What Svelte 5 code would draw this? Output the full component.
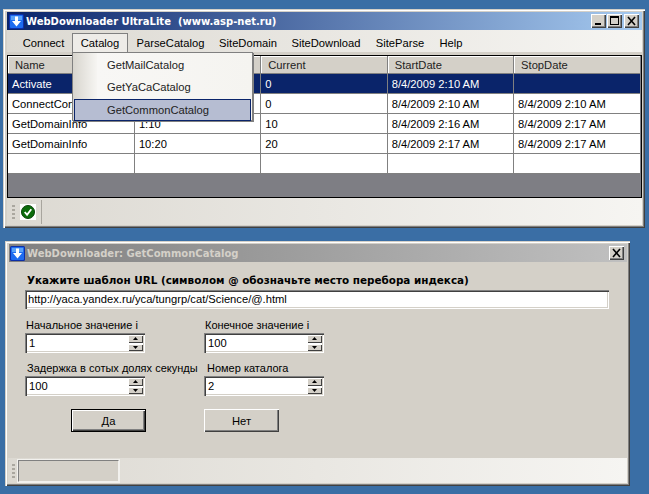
<script>
  const menu = [
    { label: 'Connect', w: 61 },
    { label: 'Catalog', w: 56, open: true },
    { label: 'ParseCatalog', w: 85 },
    { label: 'SiteDomain', w: 70 },
    { label: 'SiteDownload', w: 86 },
    { label: 'SiteParse', w: 62 },
    { label: 'Help', w: 40 }
  ];
  const cols = ['Name', '', 'Current', 'StartDate', 'StopDate'];
  const rows = [
    ['Activate', '', '0', '8/4/2009 2:10 AM', ''],
    ['ConnectCon', '', '0', '8/4/2009 2:10 AM', '8/4/2009 2:10 AM'],
    ['GetDomainInfo', '1:10', '10', '8/4/2009 2:16 AM', '8/4/2009 2:17 AM'],
    ['GetDomainInfo', '10:20', '20', '8/4/2009 2:17 AM', '8/4/2009 2:17 AM'],
    ['', '', '', '', '']
  ];
</script>

{#snippet appIcon()}
  <svg class="appicon" width="15" height="15" viewBox="0 0 15 15">
    <rect width="15" height="15" rx="1.500" fill="#0c2fa8" />
    <rect x="1" y="1" width="13" height="13" rx="1" fill="#1e6cf0" />
    <rect x="2" y="2" width="11" height="4" fill="#5aa2f7" />
    <path d="M6 2.500h3v4.500h3l-4.500 5.500L3 7h3z" fill="#fff" />
  </svg>
{/snippet}

{#snippet spinner(value, cls)}
  <div class="spin {cls}">
    <span class="val">{value}</span>
    <div class="arrows">
      <div class="arr"><svg width="5" height="3" viewBox="0 0 5 3"><path d="M2.500 0L5 3H0z" fill="#000" /></svg></div>
      <div class="arr"><svg width="5" height="3" viewBox="0 0 5 3"><path d="M0 0h5L2.500 3z" fill="#000" /></svg></div>
    </div>
  </div>
{/snippet}

{#snippet grip()}
  <div class="grip"><i></i><i></i><i></i><i></i></div>
{/snippet}

<div class="win main">
  <div class="title active">
    {@render appIcon()}
    <span class="ttext">WebDownloader UltraLite&nbsp; (www.asp-net.ru)</span>
    <div class="tbtns">
      <div class="tb"><svg width="15" height="14" viewBox="0 0 15 14"><rect x="4" y="9" width="6" height="2" fill="#000" /></svg></div>
      <div class="tb"><svg width="15" height="14" viewBox="0 0 15 14"><path d="M3 2h9v9H3z M4 4v6h7V4z" fill="#000" fill-rule="evenodd" /></svg></div>
      <div class="tb gap"><svg width="15" height="14" viewBox="0 0 15 14"><path d="M4 3l7 8M11 3l-7 8" stroke="#000" stroke-width="1.600" /></svg></div>
    </div>
  </div>
  <div class="menubar">
    {#each menu as m}
      <div class="mi" class:open={m.open} style="width:{m.w}px">{m.label}</div>
    {/each}
  </div>
  <div class="gridwrap">
    <table>
      <thead>
        <tr>{#each cols as c}<th>{c}</th>{/each}</tr>
      </thead>
      <tbody>
        {#each rows as r, i}
          <tr class:sel={i === 0}>{#each r as c}<td>{c}</td>{/each}</tr>
        {/each}
      </tbody>
    </table>
  </div>
  <div class="toolbar">
    {@render grip()}
    <div class="tool">
      <div class="wicon">
        <svg width="14" height="14" viewBox="0 0 15 15">
          <circle cx="7.500" cy="7.500" r="7" fill="#0b6b0b" stroke="#063f06" />
          <path d="M4 7.500l2.500 3L11 4.500" fill="none" stroke="#fff" stroke-width="2" />
        </svg>
      </div>
    </div>
  </div>
  <div class="popup">
    <div class="pi">GetMailCatalog</div>
    <div class="pi">GetYaCaCatalog</div>
    <div class="pi hot">GetCommonCatalog</div>
  </div>
</div>

<div class="win dlg">
  <div class="title inactive">
    {@render appIcon()}
    <span class="ttext">WebDownloader: GetCommonCatalog</span>
    <div class="tbtns">
      <div class="tb"><svg width="15" height="14" viewBox="0 0 15 14"><path d="M4 3l7 8M11 3l-7 8" stroke="#000" stroke-width="1.600" /></svg></div>
    </div>
  </div>
  <div class="form">
    <div class="lead">Укажите шаблон URL (символом @ обозначьте место перебора индекса)</div>
    <div class="url">http://yaca.yandex.ru/yca/tungrp/cat/Science/@.html</div>
    <div class="fields">
      <div class="field">
        <div class="lbl">Начальное значение i</div>
        {@render spinner('1', 'a')}
      </div>
      <div class="field">
        <div class="lbl">Конечное значение i</div>
        {@render spinner('100', 'low')}
      </div>
      <div class="field">
        <div class="lbl third">Задержка в сотых долях секунды</div>
        {@render spinner('100', 'a')}
      </div>
      <div class="field">
        <div class="lbl second">Номер каталога</div>
        {@render spinner('2', 'a')}
      </div>
    </div>
    <div class="actions">
      <div class="btn def">Да</div>
      <div class="btn">Нет</div>
    </div>
  </div>
  <div class="status">
    {@render grip()}
    <div class="panel"></div>
  </div>
</div>

<style>
  :global(body) {
    margin: 0;
    background: #3a6ea5;
    font-family: "Liberation Sans", Arial, sans-serif;
    font-size: 11.2px;
    color: #000;
    height: 494px;
    overflow: hidden;
  }
  .win {
    position: absolute;
    box-sizing: border-box;
    display: flex;
    flex-direction: column;
    background: #d4d0c8;
    padding: 3px 3px 3px 4px;
    box-shadow: inset 1px 1px 0 #d4d0c8, inset 2px 2px 0 #fff, inset -1px -1px 0 #404040, inset -2px -2px 0 #808080;
  }
  .main { left: 3px; top: 9px; width: 642px; height: 219px; }
  .dlg { left: 5px; top: 241px; width: 625px; height: 245px; }
  .title {
    height: 18px;
    display: flex;
    align-items: center;
    padding: 0 3px 0 2px;
    flex: none;
  }
  .active { background: linear-gradient(90deg, #0a246a, #a6caf0); }
  .inactive { background: linear-gradient(90deg, #808080, #c0c0c0); }
  .dlg .title { padding-left: 1px; }
  .appicon { flex: none; }
  .ttext {
    font-family: "DejaVu Sans", Verdana, sans-serif;
    font-weight: bold;
    font-size: 10px;
    margin-left: 2px;
    white-space: nowrap;
  }
  .active .ttext { color: #fff; }
  .inactive .ttext { color: #d4d0c8; }
  .tbtns { margin-left: auto; display: flex; gap: 1px; }
  .tb {
    width: 15px;
    height: 14px;
    background: #d4d0c8;
    box-shadow: inset 1px 1px 0 #fff, inset -1px -1px 0 #404040, inset -2px -2px 0 #808080;
    display: flex;
  }
  .tb.gap { margin-left: 1px; }
  .menubar {
    height: 22px;
    display: flex;
    padding: 3px 0 0 4px;
    box-sizing: border-box;
    background: linear-gradient(90deg, #dcd9d2, #f6f5f2);
    flex: none;
  }
  .mi {
    display: flex;
    align-items: center;
    justify-content: center;
    height: 19px;
    box-sizing: border-box;
    white-space: nowrap;
  }
  .mi:first-child { padding-left: 4px; }
  .mi.open {
    background: #eeece8;
    border: 1px solid #808080;
    border-bottom: 0;
    position: relative;
    z-index: 3;
  }
  .gridwrap {
    margin-top: 3px;
    height: 143px;
    box-sizing: border-box;
    flex: none;
    background: #7e7e84;
    border: 1px solid #000;
    overflow: hidden;
  }
  table {
    border-collapse: collapse;
    table-layout: fixed;
    width: 632px;
    background: #fff;
  }
  th {
    height: 17px;
    padding: 0 0 0 7px;
    font-weight: normal;
    text-align: left;
    background: #d4d0c8;
    border-right: 1px solid #808080;
    border-bottom: 1px solid #808080;
    box-shadow: inset 1px 1px 0 #fff;
    overflow: hidden;
    color: #222;
  }
  td {
    height: 19px;
    padding: 0 0 0 4px;
    border-right: 1px solid #808080;
    border-bottom: 1px solid #808080;
    white-space: nowrap;
    overflow: hidden;
  }
  th:last-child, td:last-child { border-right: 0; }
  tr.sel td { background: #0a246a; color: #fff; }
  .toolbar {
    flex: 1;
    display: flex;
    align-items: center;
    padding-left: 5px;
    background: linear-gradient(90deg, #dcd9d2, #f6f5f2);
  }
  .grip { display: flex; flex-direction: column; gap: 2px; flex: none; }
  .grip i { width: 3px; height: 2px; background: #aaa79f; display: block; }
  .tool {
    width: 27px;
    height: 24px;
    border-right: 1px solid #a8a59e;
    display: flex;
    align-items: center;
    box-sizing: border-box;
    padding-left: 5px;
  }
  .wicon {
    width: 16px;
    height: 16px;
    background: #fff;
    display: flex;
    align-items: center;
    justify-content: center;
  }
  .popup {
    position: absolute;
    left: 69px;
    top: 43px;
    width: 181px;
    height: 69px;
    box-sizing: border-box;
    z-index: 2;
    border: 1px solid #808080;
    box-shadow: 1px 1px 0 #808080;
    background: linear-gradient(90deg, #d8d5ce, #f6f5f2 24px, #f8f7f5 24px, #f5f4f0);
    padding: 1px;
  }
  .pi {
    height: 22px;
    line-height: 22px;
    padding-left: 33px;
    box-sizing: border-box;
    color: #222;
  }
  .pi.hot {
    margin-top: 1px;
    background: #b6bdd2;
    border: 1px solid #0a246a;
    line-height: 20px;
    padding-left: 32px;
  }
  .form {
    flex: 1;
    padding: 10px 0 0 16px;
    display: flex;
    flex-direction: column;
    align-items: flex-start;
    box-sizing: border-box;
  }
  .lead {
    font-family: "DejaVu Sans", Verdana, sans-serif;
    font-weight: bold;
    font-size: 10.4px;
    height: 16px;
    line-height: 16px;
    margin-left: 2px;
    white-space: nowrap;
  }
  .url, .spin {
    background: #fff;
    box-sizing: border-box;
    box-shadow: inset 1px 1px 0 #808080, inset 2px 2px 0 #404040, inset -1px -1px 0 #fff, inset -2px -2px 0 #d4d0c8;
  }
  .url {
    margin-top: 2px;
    width: 584px;
    height: 19px;
    line-height: 19px;
    padding-left: 3px;
    white-space: nowrap;
  }
  .fields {
    display: grid;
    grid-template-columns: 179px 120px;
    row-gap: 8px;
    margin-top: 9px;
  }
  .lbl { height: 14px; line-height: 14px; margin: 0 0 1px 1px; white-space: nowrap; font-size: 11px; }
  .lbl.second { margin-left: 3px; }
  .lbl.third { margin-left: 2px; }
  .spin {
    width: 120px;
    height: 20px;
    display: flex;
    align-items: center;
    padding-left: 4px;
  }
  .spin.low { margin-top: 1px; }
  .val { flex: 1; }
  .arrows {
    display: flex;
    flex-direction: column;
    gap: 1px;
    width: 15px;
    height: 16px;
    margin-right: 2px;
  }
  .arr {
    flex: 1;
    background: #d4d0c8;
    box-shadow: inset 1px 1px 0 #fff, inset -1px -1px 0 #404040, inset 0 0 0 1px #808080;
    display: flex;
    align-items: center;
    justify-content: center;
  }
  .actions {
    display: flex;
    gap: 58px;
    margin: 13px 0 0 46px;
  }
  .btn {
    width: 75px;
    height: 23px;
    box-sizing: border-box;
    display: flex;
    align-items: center;
    justify-content: center;
    box-shadow: inset 1px 1px 0 #fff, inset -1px -1px 0 #404040, inset -2px -2px 0 #808080;
  }
  .btn.def {
    border: 1px solid #000;
  }
  .status {
    height: 25px;
    flex: none;
    display: flex;
    align-items: center;
    padding-left: 4px;
    margin-left: -1px;
    background: linear-gradient(90deg, #dcd9d2, #f6f5f2);
  }
  .panel {
    width: 101px;
    height: 22px;
    margin-left: 3px;
    box-sizing: border-box;
    background: #d4d0c8;
    border: 1px solid;
    border-color: #808080 #f2f1ee #f2f1ee #808080;
    outline: 1px solid #f2f1ee;
  }
</style>
